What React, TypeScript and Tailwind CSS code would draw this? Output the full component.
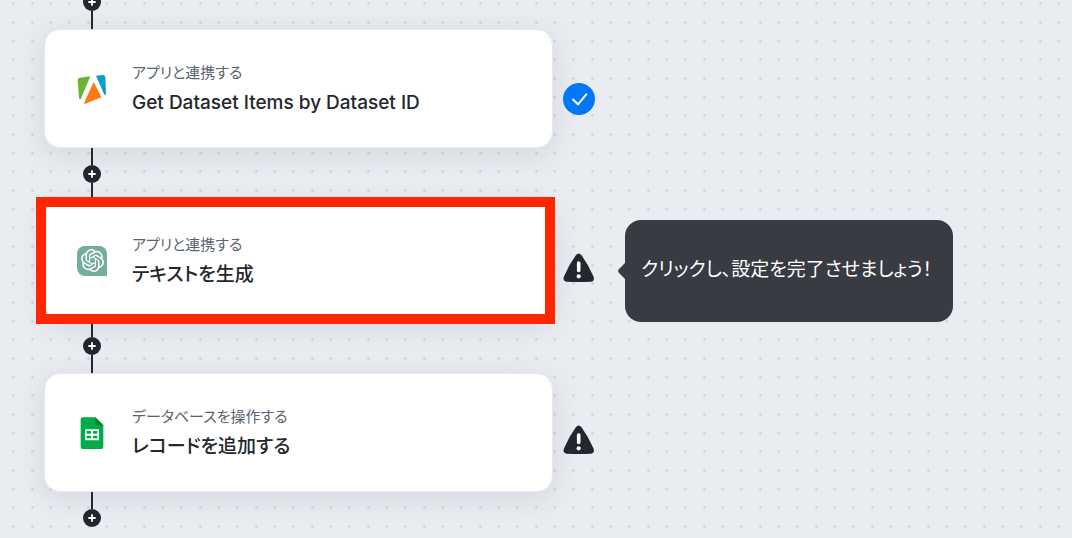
import type { ReactNode } from "react"
import { SiOpenai } from "react-icons/si"

type Step = {
  label: string
  title: string
  icon: ReactNode
  done: boolean
  highlighted?: boolean
  hint?: string
}

function DotGrid() {
  return (
    <svg className="absolute inset-0 h-full w-full" aria-hidden="true">
      <defs>
        <pattern id="dots" width="56" height="56" patternUnits="userSpaceOnUse">
          {[3, 22, 41].map((y) =>
            [13, 32, 50].map((x) => (
              <circle key={`${x}-${y}`} cx={x + 0.5} cy={y + 0.5} r="1.4" fill="#d2d5da" />
            ))
          )}
        </pattern>
      </defs>
      <rect width="100%" height="100%" fill="url(#dots)" />
    </svg>
  )
}

function ApifyIcon() {
  return (
    <svg viewBox="48 38 96 96" className="size-8 shrink-0" aria-hidden="true">
      <path d="M59 52 L91 48 L62 117 Q58 118 57 112 L53 60 Q53 53 59 52Z" fill="#6cb331" />
      <path d="M108 46 L129 44 Q135 44 136 50 L138 99 Q138 105 133 103Z" fill="#0a9cca" />
      <path d="M101 65 L124 111 L76 130 Q71 131 74 124Z" fill="#ff770f" />
    </svg>
  )
}

function ChatGptIcon() {
  return (
    <span className="flex size-8 shrink-0 items-center justify-center">
      <span className="flex size-[30px] items-center justify-center rounded-lg rounded-br-none bg-[#75ac9d]">
        <SiOpenai className="size-[23px] text-white" aria-hidden="true" />
      </span>
    </span>
  )
}

function SheetsIcon() {
  return (
    <svg viewBox="48 38 96 96" className="size-8 shrink-0" aria-hidden="true">
      <path d="M68 39 H106 L130 63 V128 Q130 134 124 134 H68 Q62 134 62 128 V45 Q62 39 68 39Z" fill="#00ac47" />
      <path d="M106 39 L130 63 H106Z" fill="#00832d" />
      <path
        d="M75 75 H117 V108 H75Z M80 80 V88 H93 V80Z M99 80 V88 H112 V80Z M80 94 V102 H93 V94Z M99 94 V102 H112 V94Z"
        fill="#fff"
        fillRule="evenodd"
      />
    </svg>
  )
}

function DoneIcon() {
  return (
    <svg viewBox="0 0 32 32" className="size-8" role="img" aria-label="完了">
      <circle cx="16" cy="16" r="16" fill="#0278f8" />
      <path d="M10 16.5 L15 21.3 L23.3 11.3" fill="none" stroke="#fff" strokeWidth="2" strokeLinecap="round" strokeLinejoin="round" />
    </svg>
  )
}

function WarningIcon() {
  return (
    <svg viewBox="0 2 32 32" className="size-8 overflow-visible" role="img" aria-label="未設定">
      <path
        d="M13 2.1 Q15.6 -1 18.4 2.1 Q25.5 12 30.5 23.5 Q32 28 28 28.7 Q16 29.5 3.5 28.7 Q-0.6 28 1 23.5 Q6 11.5 13 2.1Z"
        fill="#23272e"
      />
      <path d="M15.7 10 V17.5" stroke="#fff" strokeWidth="3.6" strokeLinecap="round" />
      <circle cx="15.7" cy="23.3" r="2.1" fill="#fff" />
    </svg>
  )
}

function Connector({ last = false }: { last?: boolean }) {
  return (
    <div className="ml-[39px] flex w-[18px] flex-col items-center">
      <div className="h-[17px] w-0.5 bg-[#23272e]" />
      <button type="button" aria-label="ステップを追加" className="flex size-[18px] items-center justify-center rounded-full bg-[#23272e]">
        <svg viewBox="0 0 8 8" className="size-2" aria-hidden="true">
          <path d="M4 1 V7 M1 4 H7" stroke="#fff" strokeWidth="1.8" strokeLinecap="round" />
        </svg>
      </button>
      {!last && <div className="h-[18px] w-0.5 bg-[#23272e]" />}
    </div>
  )
}

function StepRow({ step }: { step: Step }) {
  return (
    <div className="flex items-center gap-[10px]">
      <div className="relative w-full max-w-[509px]">
        <button
          type="button"
          className="flex min-h-[119px] w-full items-center gap-6 rounded-2xl border border-[#e6e9ed] bg-white px-[31px] text-left shadow-[0_6px_28px_rgba(60,75,80,0.12)]"
        >
          {step.icon}
          <span className="flex flex-col">
            <span className="text-[15px] leading-7 text-[#5a6370]">{step.label}</span>
            <span className="text-[19px] leading-8 font-medium text-[#23272e]">{step.title}</span>
          </span>
        </button>
        {step.highlighted && (
          <div className="pointer-events-none absolute -inset-y-1 -right-0.5 -left-2 border-10 border-[#ff2600]" />
        )}
      </div>
      <div className="relative mt-5 shrink-0">
        {step.done ? <DoneIcon /> : <WarningIcon />}
        {step.hint && (
          <div
            role="tooltip"
            className="absolute top-1/2 left-full ml-[30px] flex h-[102px] w-[328px] -translate-y-1/2 items-center rounded-2xl bg-[#383b42] px-4 text-[19px] whitespace-nowrap text-white"
          >
            <svg viewBox="0 0 7 16" className="absolute top-1/2 -left-[7px] h-4 w-[7px] -translate-y-1/2" aria-hidden="true">
              <path d="M7 0 L0.6 6.6 Q-0.4 8 0.6 9.4 L7 16Z" fill="#383b42" />
            </svg>
            {step.hint}
          </div>
        )}
      </div>
    </div>
  )
}

const steps: Step[] = [
  {
    label: "アプリと連携する",
    title: "Get Dataset Items by Dataset ID",
    icon: <ApifyIcon />,
    done: true,
  },
  {
    label: "アプリと連携する",
    title: "テキストを生成",
    icon: <ChatGptIcon />,
    done: false,
    highlighted: true,
    hint: "クリックし、設定を完了させましょう！",
  },
  {
    label: "データベースを操作する",
    title: "レコードを追加する",
    icon: <SheetsIcon />,
    done: false,
  },
]

export default function App() {
  return (
    <main
      lang="ja"
      className="relative min-h-screen overflow-hidden bg-[#e9ecf1] font-['Inter','Noto_Sans_CJK_JP',sans-serif] [font-feature-settings:'palt']"
    >
      <DotGrid />
      <div className="relative -mt-6 pr-4 pl-11">
        <Connector />
        {steps.map((step, i) => (
          <div key={step.title}>
            <StepRow step={step} />
            <Connector last={i === steps.length - 1} />
          </div>
        ))}
      </div>
    </main>
  )
}
